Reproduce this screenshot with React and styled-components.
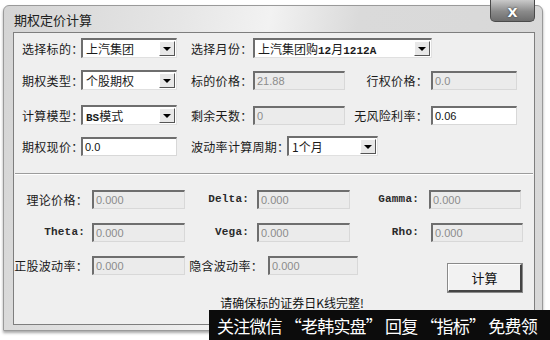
import styled, { createGlobalStyle } from "styled-components";

const Global = createGlobalStyle`
  html, body {
    margin: 0;
    padding: 0;
    background: #ffffff;
  }
  body {
    width: 550px;
    height: 340px;
    overflow: hidden;
    font-family: "Noto Sans CJK SC", "Noto Sans", sans-serif;
    color: #1a1a1a;
  }
`;

const Pagina = styled.div`
  position: relative;
  width: 550px;
  height: 340px;
  padding: 5px 0 0 3px;
  box-sizing: border-box;
`;

const Ventana = styled.div`
  position: relative;
  width: 540px;
  height: 326px;
  box-sizing: border-box;
  border: 1px solid #9a9a9a;
  border-radius: 6px 6px 0 0;
  background: linear-gradient(100deg, #d4d4d4 0%, #e6e6e6 30%, #f2f2f2 45%, #dadada 60%, #d8d8d8 100%);
  box-shadow: 0 2px 3px rgba(0, 0, 0, 0.35);
  padding: 0 6px 0 9px;
`;

const BarraTitulo = styled.div`
  height: 26px;
  display: flex;
  align-items: center;
  font-size: 13px;
  color: #202020;
  padding-left: 1px;
`;

const BotonCerrar = styled.div`
  position: absolute;
  top: -6px;
  right: 7px;
  width: 45px;
  height: 22px;
  box-sizing: border-box;
  border: 1px solid #4a4a4a;
  border-top: none;
  border-radius: 0 0 5px 5px;
  background: linear-gradient(#c9c9c9, #8a8a8a 55%, #6d6d6d);
  display: flex;
  align-items: center;
  justify-content: center;
  color: #ffffff;
  font-family: "DejaVu Sans", sans-serif;
  font-weight: 700;
  font-size: 13px;
  text-shadow: 0 0 2px #222;
  padding-top: 3px;
`;

const Panel = styled.div`
  width: 522px;
  height: 293px;
  box-sizing: border-box;
  border: 1px solid #7e7e7e;
  background: #efefef;
`;

const Seccion = styled.div`
  padding: ${(p) => p.$pad};
`;

const Fila = styled.div`
  display: flex;
  align-items: ${(p) => p.$align || "center"};
  height: ${(p) => p.$h || 20}px;
  margin-top: ${(p) => p.$mt || 0}px;
`;

const Etiqueta = styled.div`
  width: ${(p) => p.$w}px;
  flex: none;
  font-size: 12px;
  text-align: ${(p) => (p.$right ? "right" : "left")};
  padding-right: ${(p) => p.$pr || 0}px;
  margin-left: ${(p) => p.$ml || 0}px;
  box-sizing: border-box;
  white-space: nowrap;
  letter-spacing: 0.3px;
`;

const EtiquetaLatina = styled(Etiqueta)`
  font-family: "Liberation Mono", monospace;
  font-weight: 700;
  font-size: 11px;
  letter-spacing: 0.2px;
  color: #2a2a2a;
`;

const Caja = styled.div`
  width: ${(p) => p.$w}px;
  height: 19px;
  flex: none;
  box-sizing: border-box;
  margin-left: ${(p) => p.$ml || 0}px;
  border-top: 2px solid #6e6e6e;
  border-left: 2px solid #6e6e6e;
  border-right: 1px solid #d8d8d8;
  border-bottom: 1px solid #d8d8d8;
  background: ${(p) => (p.$off ? "#ebebeb" : "#ffffff")};
  color: ${(p) => (p.$off ? "#8c8c8c" : "#111111")};
  font-family: "Liberation Sans", "Noto Sans CJK SC", sans-serif;
  font-size: 11px;
  line-height: 16px;
  padding-left: 2px;
  white-space: nowrap;
  overflow: hidden;
`;

const Selector = styled.div`
  width: ${(p) => p.$w}px;
  height: 20px;
  flex: none;
  box-sizing: border-box;
  border-top: 2px solid #6e6e6e;
  border-left: 2px solid #6e6e6e;
  border-right: 1px solid #e0e0e0;
  border-bottom: 1px solid #e0e0e0;
  background: #ffffff;
  display: flex;
  align-items: center;
  justify-content: space-between;
  padding-left: 3px;
  padding-right: 1px;
  font-size: 12px;
  white-space: nowrap;
`;

const Flecha = styled.div`
  width: 16px;
  height: 15px;
  box-sizing: border-box;
  background: #e8e8e8;
  border-top: 1px solid #ffffff;
  border-left: 1px solid #ffffff;
  border-right: 1px solid #555;
  border-bottom: 1px solid #555;
  display: flex;
  align-items: center;
  justify-content: center;
  &::after {
    content: "";
    border-left: 4px solid transparent;
    border-right: 4px solid transparent;
    border-top: 4px solid #000;
  }
`;

const Mezcla = styled.span`
  font-family: "Liberation Mono", "Noto Sans CJK SC", monospace;
  font-size: 11px;
  font-weight: 700;
`;

const Separador = styled.div`
  margin: 17px 1px 0;
  height: 0;
  border-top: 1px solid #9c9c9c;
  border-bottom: 1px solid #ffffff;
`;

const Hueco = styled.div`
  flex: 1;
`;

const BotonCalcular = styled.button`
  width: 74px;
  height: 28px;
  margin-top: 8px;
  margin-right: 12px;
  box-sizing: border-box;
  background: #f2f2f2;
  border-top: 1px solid #ffffff;
  border-left: 1px solid #ffffff;
  border-right: 2px solid #444;
  border-bottom: 2px solid #444;
  outline: 1px solid #8a8a8a;
  font-family: "Noto Sans CJK SC", sans-serif;
  font-size: 13px;
  color: #111;
  padding: 0;
`;

const Aviso = styled.div`
  margin-top: 2px;
  padding-left: 36px;
  text-align: center;
  font-size: 12px;
  color: #111;
`;

const Franja = styled.div`
  position: absolute;
  left: 209px;
  top: 310px;
  width: 341px;
  height: 30px;
  background: #0c0c0c;
  color: #ffffff;
  font-size: 17px;
  display: flex;
  align-items: center;
  padding-left: 8px;
  box-sizing: border-box;
  white-space: nowrap;
  overflow: hidden;
  letter-spacing: -0.8px;
`;

const Seleccion = ({ w, children }) => (
  <Selector $w={w}>
    <span>{children}</span>
    <Flecha />
  </Selector>
);

const App = () => {
  return (
    <Pagina>
      <Global />
      <Ventana>
        <BarraTitulo>期权定价计算</BarraTitulo>
        <BotonCerrar>X</BotonCerrar>
        <Panel>
          <Seccion $pad="5px 0 0 8px">
            <Fila>
              <Etiqueta $w={59}>选择标的：</Etiqueta>
              <Seleccion w={96}>上汽集团</Seleccion>
              <Etiqueta $w={62} $ml={14}>选择月份：</Etiqueta>
              <Seleccion w={179}>
                上汽集团购<Mezcla>12</Mezcla>月<Mezcla>1212A</Mezcla>
              </Seleccion>
            </Fila>
            <Fila $mt={12}>
              <Etiqueta $w={59}>期权类型：</Etiqueta>
              <Seleccion w={96}>个股期权</Seleccion>
              <Etiqueta $w={62} $ml={14}>标的价格：</Etiqueta>
              <Caja $w={92} $off>21.88</Caja>
              <Etiqueta $w={86} $right $pr={3}>行权价格：</Etiqueta>
              <Caja $w={86} $off>0.0</Caja>
            </Fila>
            <Fila $mt={15}>
              <Etiqueta $w={59}>计算模型：</Etiqueta>
              <Seleccion w={96}>
                <Mezcla>BS</Mezcla>模式
              </Seleccion>
              <Etiqueta $w={62} $ml={14}>剩余天数：</Etiqueta>
              <Caja $w={92} $off>0</Caja>
              <Etiqueta $w={86} $right $pr={3}>无风险利率：</Etiqueta>
              <Caja $w={86}>0.06</Caja>
            </Fila>
            <Fila $mt={11}>
              <Etiqueta $w={59}>期权现价：</Etiqueta>
              <Caja $w={96}>0.0</Caja>
              <Etiqueta $w={96} $ml={14}>波动率计算周期：</Etiqueta>
              <Seleccion w={91}>1个月</Seleccion>
            </Fila>
          </Seccion>
          <Separador />
          <Seccion $pad="14px 0 0 0">
            <Fila>
              <Etiqueta $w={74} $right>理论价格：</Etiqueta>
              <Caja $w={93} $off $ml={4}>0.000</Caja>
              <EtiquetaLatina $w={72} $right $pr={8}>Delta:</EtiquetaLatina>
              <Caja $w={93} $off>0.000</Caja>
              <EtiquetaLatina $w={79} $right $pr={10}>Gamma:</EtiquetaLatina>
              <Caja $w={92} $off>0.000</Caja>
            </Fila>
            <Fila $mt={13}>
              <EtiquetaLatina $w={74} $right $pr={3}>Theta:</EtiquetaLatina>
              <Caja $w={93} $off $ml={4}>0.000</Caja>
              <EtiquetaLatina $w={72} $right $pr={8}>Vega:</EtiquetaLatina>
              <Caja $w={93} $off>0.000</Caja>
              <EtiquetaLatina $w={81} $right $pr={12}>Rho:</EtiquetaLatina>
              <Caja $w={92} $off>0.000</Caja>
            </Fila>
            <Fila $mt={14} $h={36} $align="flex-start">
              <Etiqueta $w={74} $right style={{ marginTop: 1 }}>正股波动率：</Etiqueta>
              <Caja $w={93} $off $ml={4}>0.000</Caja>
              <Etiqueta $w={83} $right $pr={5} style={{ marginTop: 1 }}>隐含波动率：</Etiqueta>
              <Caja $w={90} $off>0.000</Caja>
              <Hueco />
              <BotonCalcular>计算</BotonCalcular>
            </Fila>
            <Aviso>请确保标的证券日K线完整!</Aviso>
          </Seccion>
        </Panel>
      </Ventana>
      <Franja>关注微信 “老韩实盘” 回复 “指标” 免费领</Franja>
    </Pagina>
  );
};

export default App;
